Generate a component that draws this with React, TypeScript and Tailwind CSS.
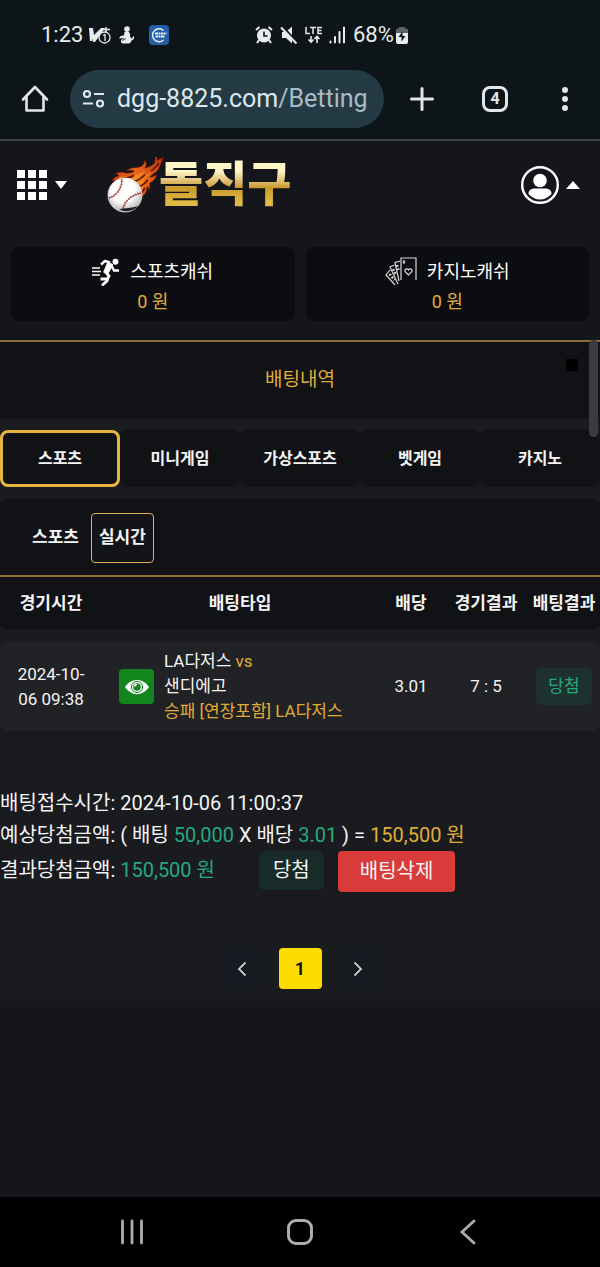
import { useState } from 'react';

const categories = ['스포츠', '미니게임', '가상스포츠', '벳게임', '카지노'];
const modes = ['스포츠', '실시간'];

function StatusBar() {
    return (
        <div className="flex h-[70px] items-center text-[22px] leading-6 text-[#e8ecee]">
            <div className="flex w-[255px] items-center pl-[41px]">
                <span>1:23</span>
                {/* Notification icons */}
                <svg viewBox="0 0 22 20" className="ml-1.5 h-5 w-[22px]" fill="none">
                    <path d="M0 3h4l1 7 7-7h4L6 17H4z" fill="#e8ecee" />
                    <path d="M0 3h3v13H1z" fill="#e8ecee" />
                    <path d="M13 4.500h8m-4-2.500v5" stroke="#e8ecee" strokeWidth="1.500" />
                    <circle cx="15.500" cy="12.500" r="5.500" fill="#0d1518" stroke="#e8ecee" strokeWidth="1.300" />
                    <path d="M14 10.500l2-1v6.500" stroke="#e8ecee" strokeWidth="1.300" />
                </svg>
                <svg viewBox="0 0 16 18" className="ml-2 h-[18px] w-4" fill="#e8ecee">
                    <circle cx="8" cy="3" r="2.800" />
                    <path d="M5.500 6C8 4 12 6 11 10.500c1 1 1.500 1.500 1.500 2.500l2-3c1.500 1.500 0 4-2 4.500C12 17 10.500 17.500 8 17.500H4.500C2 17.500 1 15 3 13.500L5 12 0 12.500C1 10 2.500 9 5 9.500z" />
                    <path d="M3.500 14.500l3-2" stroke="#0d1518" strokeWidth="1" />
                </svg>
                <svg viewBox="0 0 20 20" className="ml-3.5 h-5 w-5" fill="none">
                    <rect width="20" height="20" rx="4" fill="#2460a8" />
                    <path d="M14.500 5.500a6.500 6.500 0 1 0 0 9.500" stroke="#e9f2fb" strokeWidth="1.400" />
                    <path d="M6 8.500h11.500M6.500 11.500h9.500" stroke="#e9f2fb" strokeWidth="1.800" strokeDasharray="3 .5 1.500 .5" />
                </svg>
            </div>
            <svg viewBox="0 0 18 18" className="h-[18px] w-[18px]" fill="none">
                <path d="M1 4l3.500-3M17 4l-3.500-3M4 14l-2 3M14 14l2 3" stroke="#e8ecee" strokeWidth="2" />
                <circle cx="9" cy="9.500" r="7" fill="#e8ecee" />
                <path d="M9 5.500V10h3.500" stroke="#0d1518" strokeWidth="1.600" />
            </svg>
            <svg viewBox="0 0 20 20" className="ml-1.5 h-5 w-5" fill="none">
                <path d="M3 7h4l6-5.500v17L7 13H3z" fill="#e8ecee" />
                <path d="M3.500 1.500l15 16" stroke="#0d1518" strokeWidth="2" />
                <path d="M2 2.500l15.500 16" stroke="#e8ecee" strokeWidth="2" />
            </svg>
            <svg viewBox="0 0 18 20" className="ml-1.5 h-5 w-[18px]" fill="none" stroke="#e8ecee">
                <path d="M1 2v6.500h4M5 2.500h6M8 2.500v6.500M17 2.500h-4v6h4M13 5.500h3.500" strokeWidth="1.500" />
                <path d="M6 11v6M3.500 14.500L6 17l2.500-2.500M12 18v-6M9.500 14l2.500-2.500L14.500 14" strokeWidth="1.600" />
            </svg>
            <svg viewBox="0 0 16 18" className="ml-1.5 h-[18px] w-4" stroke="#e8ecee" strokeWidth="2" strokeLinecap="round">
                <path d="M1.500 15.500v1M6 11v5.500M10.500 6v10.500M15 1.500v15" />
            </svg>
            <span className="ml-2">68%</span>
            <svg viewBox="0 0 12 18" className="ml-0.5 h-[18px] w-3">
                <path d="M3 2.500V1h6v1.500h1.500Q12 2.500 12 4v4H0V4q0-1.500 1.500-1.500z" fill="#5d6466" />
                <path d="M0 7h12v9q0 2-2 2H2q-2 0-2-2z" fill="#e8ecee" />
                <path d="M6.500 5.500L2.500 11h3v4.500L9.500 10h-3z" fill="#0d1518" />
            </svg>
        </div>
    );
}

function BrowserBar() {
    return (
        <div className="flex items-center border-b-2 border-[#3a4145] pb-[11px] text-[#e1e7ea]">
            <button aria-label="Home" className="ml-[21px]">
                <svg viewBox="0 0 28 28" className="h-7 w-7" fill="none" stroke="currentColor" strokeWidth="2.600" strokeLinejoin="round" strokeLinecap="round">
                    <path d="M2 14.500L14 2l12 12.500M5.500 12v13.500h17V12" />
                </svg>
            </button>
            <div className="ml-[21px] flex h-[58px] min-w-0 flex-1 items-center rounded-full bg-[#243b45] pl-3">
                <svg viewBox="0 0 24 20" className="h-5 w-6 shrink-0" fill="none" stroke="currentColor" strokeWidth="2.200">
                    <circle cx="5" cy="5" r="3" />
                    <path d="M12 5h10M1 14.500h10" />
                    <circle cx="18" cy="14.500" r="3" />
                </svg>
                <a href="#betting" className="ml-[11px] text-[25px] leading-8 whitespace-nowrap text-[#dce8ee]">
                    dgg-8825.com<span className="text-[#a9bcc5]">/Betting</span>
                </a>
            </div>
            <button aria-label="New tab" className="ml-[26px]">
                <svg viewBox="0 0 24 24" className="h-6 w-6" stroke="currentColor" strokeWidth="3" strokeLinecap="round">
                    <path d="M12 1.500v21M1.500 12h21" />
                </svg>
            </button>
            <button aria-label="Tabs" className="ml-12 flex h-[26px] w-[26px] items-center justify-center rounded-lg border-[3px] border-current text-base leading-5 font-bold">
                4
            </button>
            <button aria-label="Menu" className="mr-[30px] ml-[52px]">
                <svg viewBox="0 0 10 26" className="h-[26px] w-2.5" fill="currentColor">
                    <circle cx="5" cy="4" r="3" />
                    <circle cx="5" cy="13" r="3" />
                    <circle cx="5" cy="22" r="3" />
                </svg>
            </button>
        </div>
    );
}

function FlamingBall() {
    return (
        <svg viewBox="0 0 62 60" className="h-[60px] w-[62px]" fill="none">
            <defs>
                <linearGradient id="flame" x1="58" y1="2" x2="16" y2="40" gradientUnits="userSpaceOnUse">
                    <stop offset="0" stopColor="#b8330e" />
                    <stop offset=".5" stopColor="#ea651a" />
                    <stop offset="1" stopColor="#c9400d" />
                </linearGradient>
                <radialGradient id="ball" cx=".45" cy=".35" r=".7">
                    <stop offset=".5" stopColor="#fff" />
                    <stop offset="1" stopColor="#a9a9ab" />
                </radialGradient>
            </defs>
            <path
                d="M7 26c1-3 4-5 7-5-1-2-3-2-4-1 3-4 8-3 11-2 3 0 6 0 8-2-3-1-6-1-8 0 4-4 9-3 13-4 4-1 6-4 5-7 3 2 3 5 1 8 4-1 9-3 11-7 2-2 5-2 8-4-3 4-3 9-6 13-2 3-6 4-8 7 3 0 5-1 7-3-1 5-4 7-7 9-1 2 1 4-1 7 0-2-1-3-2-3 0 5-2 8-6 10L24 24z"
                fill="url(#flame)"
                stroke="#5e1507"
                strokeWidth=".8"
            />
            <path
                d="M13 23c5-3 9 0 13-2s9-1 13-5c-1 4-4 5-6 7 5-1 10-3 14-7-3 5-7 7-10 10 3 0 5 0 7-2-2 4-5 4-6 8 0 3-1 6-4 8L25 24z"
                fill="#f28a22"
            />
            <path
                d="M16 24c4-2 9 0 13-4M29 26c5 0 8-4 11-6M35 31c4-1 5-4 8-6M46 16c3-3 6-4 8-8M36 38c2-1 2-3 4-5"
                stroke="#6b1807"
                strokeWidth="1.800"
            />
            <path d="M51 2q1 3-1 5" stroke="#c9420f" strokeWidth="1.500" />
            <circle cx="20" cy="40" r="17" fill="url(#ball)" stroke="#dadada" strokeWidth=".8" />
            <path d="M4 43c7-2 13-9 13-19M18 56c0-9 8-16 18-18" stroke="#9a2f32" strokeWidth="1" />
            <path d="M4 43c7-2 13-9 13-19M18 56c0-9 8-16 18-18" stroke="#9a2f32" strokeWidth="3" strokeDasharray=".7 2" opacity=".7" />
            <path d="M14 54c6-1 13-1 19-3-4 5-13 7-19 3z" fill="#222" />
        </svg>
    );
}

function SiteHeader() {
    return (
        <header className="flex h-[88px] items-center pr-5 pl-[17px]">
            <button aria-label="메뉴" className="flex items-center gap-2">
                <svg viewBox="0 0 30 30" className="h-[30px] w-[30px]" fill="#fff">
                    {[0, 11, 22].map((y) => [0, 11, 22].map((x) => <rect key={`${x}-${y}`} x={x} y={y} width="8" height="8" />))}
                </svg>
                <svg viewBox="0 0 12 8" className="h-2 w-3" fill="#fff">
                    <path d="M0 0h12L6 8z" />
                </svg>
            </button>
            <a href="#home" className="ml-[38px] flex items-center">
                <FlamingBall />
                <span className="-ml-2 bg-linear-to-b from-[#fff6c8] from-25% via-[#c99a25] via-55% to-[#e0b945] to-80% bg-clip-text text-[48px] leading-[56px] font-black text-transparent">
                    돌직구
                </span>
            </a>
            <button aria-label="내 정보" className="ml-auto flex items-center gap-[7px]">
                <svg viewBox="0 0 38 38" className="h-[38px] w-[38px]" fill="none">
                    <circle cx="19" cy="19" r="17.800" stroke="#fff" strokeWidth="2.400" />
                    <circle cx="19" cy="14.500" r="6.800" fill="#fff" />
                    <path d="M7.500 28c0-4 3-5.500 6.500-5.500h10c3.500 0 6.500 1.500 6.500 5.500-3 3.500-7 5.500-11.500 5.500S10.500 31.500 7.500 28z" fill="#fff" />
                </svg>
                <svg viewBox="0 0 14 8" className="h-2 w-3.5" fill="#fff">
                    <path d="M0 8h14L7 0z" />
                </svg>
            </button>
        </header>
    );
}

function RunnerIcon() {
    return (
        <svg viewBox="0 0 28 28" className="h-7 w-7" fill="none" stroke="#fff">
            <path d="M0 10h8M0 13.500h9M0 17h8" strokeWidth="1.300" />
            <circle cx="23.500" cy="3.800" r="3" fill="#fff" stroke="none" />
            <path d="M9 6.500l4-3.500 5 1.500" strokeWidth="2.500" strokeLinejoin="round" />
            <path d="M16 4.500l4.500 2.500-5 8.500-3.500-1.500z" fill="#fff" strokeWidth="1.500" strokeLinejoin="round" />
            <path d="M19.500 7.500l2.500 5h5" strokeWidth="2.300" />
            <path d="M13.500 14l3.500 4-1.500 3H8.500" strokeWidth="2.800" />
            <path d="M16 22l-6 5.500" strokeWidth="2.800" />
        </svg>
    );
}

function CardsIcon() {
    return (
        <svg viewBox="0 0 32 30" className="h-[30px] w-8" fill="none" stroke="#d8d8d8" strokeWidth="1.200">
            <path d="M16 23V1h15v22" />
            <path d="M23.500 18l-3.500-3.500c-1-2.500 2.500-3.500 3.500-1.500 1-2 4.500-1 3.500 1.500z" />
            <path d="M19 3v4M17.500 5h3" />
            <path d="M15 4l-5 1.500L14 24M9.500 8L5 10l8 17M5 13l-4 5 9 10" />
            <path d="M12 8l1.500 5M8 12l3 6M4.500 17l5 6" strokeWidth="2.500" strokeDasharray="2 1.500" />
        </svg>
    );
}

function Wallet({ icon, label }: { icon: React.ReactNode; label: string }) {
    return (
        <div className="flex flex-1 flex-col items-center rounded-lg bg-[#0c0d10] pt-2.5 pb-1 text-lg">
            <div className="flex h-[30px] items-center gap-2.5 text-white">
                {icon}
                <span>{label}</span>
            </div>
            <span className="leading-[30px] text-[#e0ac38]">0 원</span>
        </div>
    );
}

function BetTable() {
    return (
        <table className="w-full table-fixed border-separate border-spacing-0 text-[17px] leading-[25px]">
            <colgroup>
                <col className="w-[17%]" />
                <col />
                <col className="w-[11%]" />
                <col className="w-[14%]" />
                <col className="w-[12%]" />
            </colgroup>
            <thead>
                <tr className="h-[53px] whitespace-nowrap *:bg-[#111215] *:p-0">
                    <th className="rounded-bl-lg">경기시간</th>
                    <th>배팅타입</th>
                    <th>배당</th>
                    <th>경기결과</th>
                    <th className="rounded-br-lg">배팅결과</th>
                </tr>
            </thead>
            <tbody className="before:block before:h-3 before:content-['']">
                <tr className="h-[89px] text-center *:bg-[#212225]">
                    <td className="rounded-l-lg px-3">2024-10-06 09:38</td>
                    <td className="p-0 text-left">
                        <div className="flex items-center gap-2.5 pl-[17px]">
                            <button aria-label="경기 보기" className="flex h-[35px] w-[35px] shrink-0 items-center justify-center rounded-sm bg-[#12851c]">
                                <svg viewBox="0 0 26 18" className="h-[18px] w-[26px]" fill="none">
                                    <path d="M1 9c6-9.500 18-9.500 24 0-6 9.500-18 9.500-24 0z" fill="#fff" />
                                    <circle cx="13" cy="9" r="5.600" stroke="#12851c" strokeWidth="1" />
                                    <circle cx="13" cy="9" r="3.800" fill="#12851c" />
                                    <path d="M10.500 8.500q.5-2 2.500-2" stroke="#fff" strokeWidth="1.300" />
                                </svg>
                            </button>
                            <p className="whitespace-nowrap">
                                LA다저스 <span className="text-[#e0ac38]">vs</span>
                                <br />
                                샌디에고
                                <br />
                                <span className="text-[#e0ac38]">승패 [연장포함] LA다저스</span>
                            </p>
                        </div>
                    </td>
                    <td className="p-0">3.01</td>
                    <td className="p-0">7 : 5</td>
                    <td className="rounded-r-lg p-0">
                        <span className="inline-flex h-[37px] items-center rounded-md bg-[#1d322e] px-3 text-[#27a880]">당첨</span>
                    </td>
                </tr>
            </tbody>
        </table>
    );
}

function BetSummary() {
    return (
        <div className="mt-14 text-xl leading-8">
            <p>배팅접수시간: 2024-10-06 11:00:37</p>
            <p>
                예상당첨금액: ( 배팅 <span className="text-[#27a880]">50,000</span> X 배당 <span className="text-[#27a880]">3.01</span> ) ={' '}
                <span className="text-[#e0ac38]">150,500 원</span>
            </p>
            <div className="flex items-start">
                <p className="leading-[38px]">
                    결과당첨금액: <span className="text-[#27a880]">150,500 원</span>
                </p>
                <span className="ml-11 rounded-md bg-[#182b29] px-3.5 leading-[39px]">당첨</span>
                <button className="ml-3.5 rounded-sm bg-[#d93b3a] px-[22px] leading-[41px]">배팅삭제</button>
            </div>
        </div>
    );
}

function Pagination() {
    return (
        <nav aria-label="페이지" className="mt-14 flex justify-center gap-4 pb-3">
            <button aria-label="이전" className="flex h-[41px] w-[41px] items-center justify-center rounded-sm bg-[#171a21]">
                <svg viewBox="0 0 10 16" className="h-4 w-2.5" fill="none" stroke="#c9cbd0" strokeWidth="1.800">
                    <path d="M8.500 1.500L2 8l6.500 6.500" />
                </svg>
            </button>
            <button className="h-[41px] w-[43px] rounded-sm bg-[#ffdc00] text-lg font-bold text-[#15161a]">1</button>
            <button aria-label="다음" className="flex h-[41px] w-[41px] items-center justify-center rounded-sm bg-[#171a21]">
                <svg viewBox="0 0 10 16" className="h-4 w-2.5" fill="none" stroke="#c9cbd0" strokeWidth="1.800">
                    <path d="M1.500 1.500L8 8l-6.500 6.500" />
                </svg>
            </button>
        </nav>
    );
}

export default function App() {
    const [category, setCategory] = useState(0);
    const [mode, setMode] = useState(1);

    return (
        <div className="flex min-h-screen flex-col bg-[#15161b] font-[Roboto,'Noto_Sans_CJK_KR',sans-serif] text-[#f4f4f5]">
            <div className="bg-[#0d1518]">
                <StatusBar />
                <BrowserBar />
            </div>

            <main className="flex-1">
                <SiteHeader />
                <div className="flex gap-[11px] px-[11px] pt-[18px] pb-[19px]">
                    <Wallet icon={<RunnerIcon />} label="스포츠캐쉬" />
                    <Wallet icon={<CardsIcon />} label="카지노캐쉬" />
                </div>

                <section className="relative border-t-2 border-[#8a6f37] bg-[#1a1b1f]">
                    {/* Scroll thumb */}
                    <div className="absolute -top-0.5 right-0.5 z-10 h-[97px] w-[9px] rounded-full bg-[#3a3b3e]" />
                    <div className="relative bg-[#111215] text-center">
                        <h1 className="text-[19px] leading-[76px] text-[#e0ac38]">배팅내역</h1>
                        <button aria-label="닫기" className="absolute top-[17px] right-[22px] h-3 w-3 bg-black" />
                    </div>

                    <div className="grid grid-cols-5 py-3">
                        {categories.map((name, i) => (
                            <button
                                key={name}
                                onClick={() => setCategory(i)}
                                className={`h-[57px] rounded-lg border-[3px] bg-[#111215] text-base font-bold whitespace-nowrap ${
                                    i === category ? 'border-[#e6b540]' : 'border-transparent'
                                }`}
                            >
                                {name}
                            </button>
                        ))}
                    </div>

                    <div className="flex gap-1 rounded-t-lg border-b-2 border-[#8a6f37] bg-[#111215] pt-3.5 pb-3 pl-6">
                        {modes.map((name, i) => (
                            <button
                                key={name}
                                onClick={() => setMode(i)}
                                className={`h-[50px] rounded-sm border bg-[#131417] px-[7px] text-[17px] font-bold ${
                                    i === mode ? 'border-[#d9b25a]' : 'border-transparent'
                                }`}
                            >
                                {name}
                            </button>
                        ))}
                    </div>

                    <BetTable />
                    <BetSummary />
                    <Pagination />
                </section>
            </main>

            <nav aria-label="System" className="flex h-[70px] items-center justify-between bg-black px-[120px] text-[#adadad]">
                <button aria-label="Recents">
                    <svg viewBox="0 0 24 26" className="h-[26px] w-6" stroke="currentColor" strokeWidth="2.800" strokeLinecap="round">
                        <path d="M2.500 2v22M12 2v22M21.500 2v22" />
                    </svg>
                </button>
                <button aria-label="Home" className="h-[26px] w-[26px] rounded-[9px] border-[3px] border-current" />
                <button aria-label="Back">
                    <svg viewBox="0 0 24 26" className="h-[26px] w-6" fill="none" stroke="currentColor" strokeWidth="2.800" strokeLinecap="round">
                        <path d="M18 2L6 13l12 11" />
                    </svg>
                </button>
            </nav>
        </div>
    );
}
